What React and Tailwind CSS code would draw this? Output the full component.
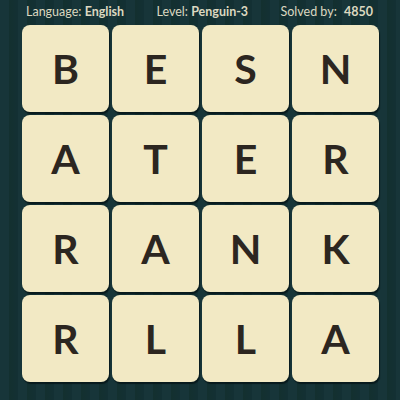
const letters = ['B', 'E', 'S', 'N', 'A', 'T', 'E', 'R', 'R', 'A', 'N', 'K', 'R', 'L', 'L', 'A'];

export default function App() {
  return (
    <div
      className="w-[400px] h-[400px] overflow-hidden bg-[repeating-linear-gradient(90deg,#173539_0px,#173539_9px,#13302f_9px,#133034_18px)]"
      style={{ fontFamily: 'Lato, "Open Sans", sans-serif' }}
    >
      {/* Header */}
      <div className="h-[25px] flex items-center text-[12.5px] text-[#dcd8c0] pl-[26px] pr-[27px] justify-between pb-[1px]">
        <p>
          Language: <span className="font-bold">English</span>
        </p>
        <p>
          Level: <span className="font-bold">Penguin-3</span>
        </p>
        <p>
          Solved by: <span className="font-bold ml-1">4850</span>
        </p>
      </div>

      {/* Board */}
      <div className="ml-[22px] grid grid-cols-[repeat(4,87px)] grid-rows-[repeat(4,87px)] gap-[3px]">
        {letters.map((l, i) => (
          <div
            key={i}
            className="bg-[#f2e9c4] rounded-[8px] shadow-[1px_2px_1px_rgba(5,20,22,0.8)] flex items-center justify-center text-[41px] font-bold text-[#2c2620] leading-none"
          >
            {l}
          </div>
        ))}
      </div>
    </div>
  );
}
